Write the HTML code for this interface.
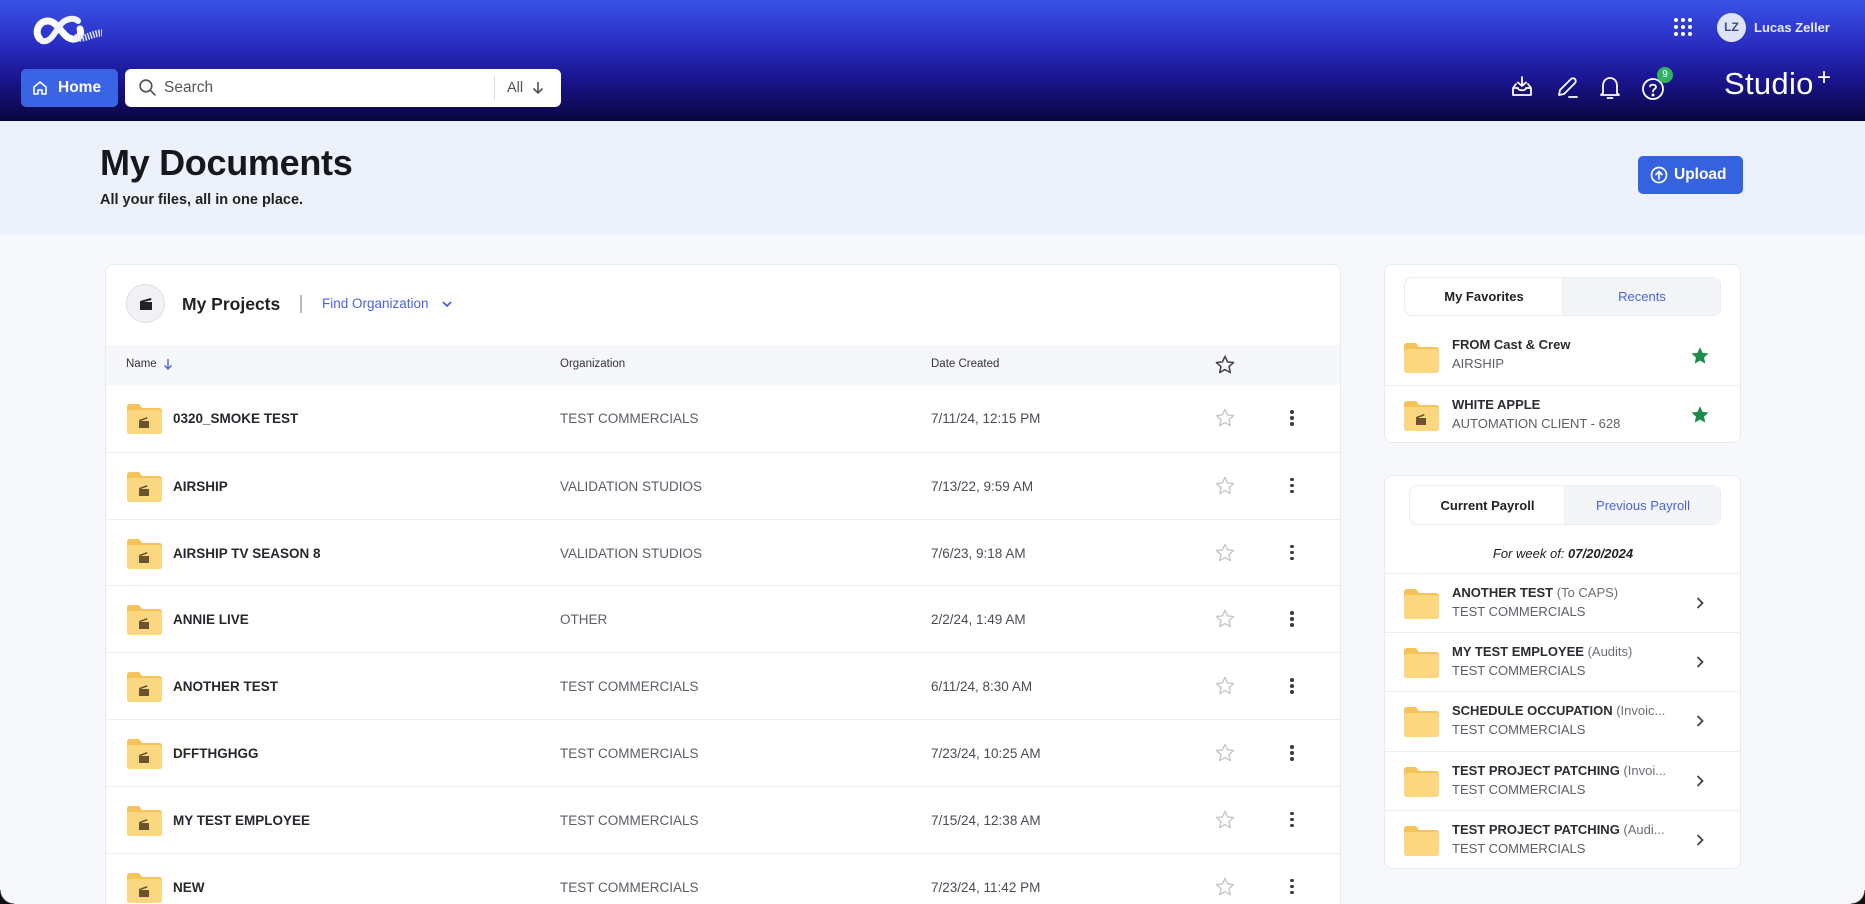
<!DOCTYPE html>
<html style="width:1865px;height:904px;overflow:hidden"><head><meta charset="utf-8"><style>
*{box-sizing:border-box;margin:0;padding:0}
body{width:1865px;height:904px;overflow:hidden;background:#f7f8fb;font-family:"Liberation Sans",sans-serif;position:relative;color:#1d1f24}
.a{position:absolute}
.hdr{left:0;top:0;width:1865px;height:121px;background:linear-gradient(180deg,#3a52e6 0%,#2a2fc4 35%,#1a1590 65%,#0a0640 100%)}
.hero{left:0;top:121px;width:1865px;height:114px;background:#edf1fb}
.card{background:#fff;border:1px solid #e8eaef;border-radius:8px}
.row{position:absolute;left:0;width:1235px;height:67px;border-top:1px solid #eceef2}
.fold{position:absolute;width:36px;height:30px}
.nm{position:absolute;left:67px;font-size:13.5px;font-weight:bold;color:#26282d}
.org{position:absolute;left:454px;font-size:13.5px;color:#5b5e66}
.dt{position:absolute;left:825px;font-size:13.5px;color:#4a4d55}
.st{position:absolute;left:1108px}
.dots{position:absolute;left:1184px;width:4px}
.dots i{display:block;width:3.5px;height:3.5px;border-radius:50%;background:#3a3d44;margin-bottom:2.5px}
.ri{position:absolute;left:0;width:356px;border-top:1px solid #eceef2}
.ri .t{position:absolute;left:67px;font-size:13px;font-weight:bold;color:#2a2c31;white-space:nowrap}
.ri .t span{font-weight:normal;color:#6b6e76}
.ri .s{position:absolute;left:67px;font-size:13px;color:#5b5e66}
</style></head><body>
<div class="a hdr"></div>
<svg class="a" style="left:32px;top:11px" width="72" height="40" viewBox="0 0 72 40">
<path d="M8 28 C2 22,6 10,16 10 C26 10,30 26,40 28 C46 29,50 24,48 18" fill="none" stroke="#fff" stroke-width="7" stroke-linecap="round"/>
<path d="M10 30 C20 32,24 18,30 12 C34 8,42 6,46 10" fill="none" stroke="#f2f4ff" stroke-width="6" stroke-linecap="round"/>
<path d="M42 26 C52 30,60 22,70 22" fill="none" stroke="#dfe3ff" stroke-width="7" stroke-dasharray="1.5 1.3"/>
</svg>
<div class="a" style="left:21px;top:69px;width:97px;height:38px;background:#3a64e3;border-radius:5px"></div>
<svg class="a" style="left:32px;top:80px" width="16" height="16" viewBox="0 0 16 16"><path d="M2 7 L8 2 L14 7 V14 H10 V10 H6 V14 H2 Z" fill="none" stroke="#fff" stroke-width="1.6" stroke-linejoin="round"/></svg>
<div class="a" style="left:58px;top:79px;color:#fff;font-size:15.5px;font-weight:bold">Home</div>
<div class="a" style="left:125px;top:69px;width:436px;height:38px;background:#fff;border-radius:6px"></div>
<svg class="a" style="left:138px;top:78px" width="19" height="19" viewBox="0 0 18 18"><circle cx="7.5" cy="7.5" r="5.5" fill="none" stroke="#555" stroke-width="1.6"/><path d="M11.5 11.5 L16 16" stroke="#555" stroke-width="1.6" stroke-linecap="round"/></svg>
<div class="a" style="left:164px;top:79px;color:#555;font-size:15.5px">Search</div>
<div class="a" style="left:494px;top:76px;width:1px;height:24px;background:#ddd"></div>
<div class="a" style="left:507px;top:80px;color:#555;font-size:14.5px">All</div>
<svg class="a" style="left:532px;top:81px" width="12" height="14" viewBox="0 0 12 14"><path d="M6 1 V12 M1.5 7.5 L6 12 L10.5 7.5" fill="none" stroke="#555" stroke-width="1.6"/></svg>
<svg class="a" style="left:1673px;top:17px" width="20" height="20" viewBox="0 0 20 20" fill="#fff"><circle cx="3" cy="3" r="2"/><circle cx="10" cy="3" r="2"/><circle cx="17" cy="3" r="2"/><circle cx="3" cy="10" r="2"/><circle cx="10" cy="10" r="2"/><circle cx="17" cy="10" r="2"/><circle cx="3" cy="17" r="2"/><circle cx="10" cy="17" r="2"/><circle cx="17" cy="17" r="2"/></svg>
<div class="a" style="left:1717px;top:13px;width:29px;height:29px;border-radius:50%;background:#dfe4f5;color:#3d4a8c;font-size:12px;font-weight:bold;text-align:center;line-height:29px">LZ</div>
<div class="a" style="left:1754px;top:20px;color:#e8ebff;font-size:13px;font-weight:bold">Lucas Zeller</div>
<svg class="a" style="left:1510px;top:75px" width="24" height="24" viewBox="0 0 24 24" fill="none" stroke="#fff" stroke-width="1.8" stroke-linecap="round" stroke-linejoin="round"><path d="M12 2 V11 M8 7.5 L12 11 L16 7.5"/><path d="M3 13 L6 9 M21 13 L18 9 M3 13 V20 H21 V13 H16 C16 16,8 16,8 13 Z"/></svg>
<svg class="a" style="left:1555px;top:75px" width="24" height="24" viewBox="0 0 24 24" fill="none" stroke="#fff" stroke-width="1.8" stroke-linecap="round" stroke-linejoin="round"><path d="M4 20 L5 15 L16 4 C17 3,19 3,20 4 C21 5,21 7,20 8 L9 19 Z M14 22 H22"/></svg>
<svg class="a" style="left:1598px;top:75px" width="24" height="26" viewBox="0 0 24 26" fill="none" stroke="#fff" stroke-width="1.8" stroke-linecap="round" stroke-linejoin="round"><path d="M5 18 V11 C5 6,8 3,12 3 C16 3,19 6,19 11 V18 L21 20 H3 Z M9.5 23 H14.5"/></svg>
<svg class="a" style="left:1641px;top:77px" width="24" height="24" viewBox="0 0 24 24" fill="none" stroke="#fff" stroke-width="1.8" stroke-linecap="round"><circle cx="12" cy="12" r="10"/><path d="M9 9.5 C9 7,15 7,15 10 C15 12,12 12,12 14.5"/><circle cx="12" cy="18" r=".6" fill="#fff"/></svg>
<div class="a" style="left:1657px;top:67px;width:16px;height:16px;border-radius:50%;background:#2fb45f;color:#fff;font-size:10px;text-align:center;line-height:16px">9</div>
<div class="a" style="left:1724px;top:66px;color:#fff;font-size:31px;letter-spacing:.3px;line-height:36px">Studio</div>
<div class="a" style="left:1817px;top:66px;color:#fff;font-size:24px;line-height:24px">+</div>
<div class="a hero"></div>
<div class="a" style="left:100px;top:142px;font-size:36px;font-weight:bold;color:#16181d;letter-spacing:-.3px">My Documents</div>
<div class="a" style="left:100px;top:192px;font-size:14.5px;font-weight:bold;color:#222">All your files, all in one place.</div>
<div class="a" style="left:1638px;top:156px;width:105px;height:38px;background:#3563e0;border-radius:5px"></div>
<svg class="a" style="left:1650px;top:166px" width="18" height="18" viewBox="0 0 18 18" fill="none" stroke="#fff" stroke-width="1.7" stroke-linecap="round"><circle cx="9" cy="9" r="7.5"/><path d="M9 13 V5.5 M6 8.5 L9 5.5 L12 8.5"/></svg>
<div class="a" style="left:1674px;top:166px;color:#fff;font-size:15.5px;font-weight:bold">Upload</div>
<div class="a card" style="left:105px;top:264px;width:1236px;height:660px;overflow:hidden">
 <div class="a" style="left:20px;top:19px;width:39px;height:39px;border-radius:50%;background:#f1f2f5;border:1px solid #dcdee3"></div>
 <svg class="a" style="left:32px;top:31px" width="16" height="16" viewBox="0 0 16 16"><path d="M2 6 H14 V14 H2 Z" fill="#222"/><path d="M2 5 L13 2 L13.5 4 L2.5 7 Z" fill="#222"/></svg>
 <div class="a" style="left:76px;top:29px;font-size:17.5px;font-weight:bold;color:#222">My Projects</div>
 <div class="a" style="left:194px;top:30px;width:1.5px;height:18px;background:#bbb"></div>
 <div class="a" style="left:216px;top:31px;font-size:13.5px;color:#4a62e0">Find Organization</div>
 <svg class="a" style="left:335px;top:34px" width="12" height="10" viewBox="0 0 12 10"><path d="M2 3 L6 7 L10 3" fill="none" stroke="#4a62e0" stroke-width="1.8"/></svg>
 <div class="a" style="left:0;top:80px;width:1236px;height:40px;background:#f5f7fa"></div>
 <div class="a" style="left:20px;top:93px;font-size:11.5px;color:#333">Name</div>
 <svg class="a" style="left:57px;top:93px" width="10" height="13" viewBox="0 0 10 13"><path d="M5 1 V11 M1.5 7.5 L5 11 L8.5 7.5" fill="none" stroke="#4a62e0" stroke-width="1.4"/></svg>
 <div class="a" style="left:454px;top:93px;font-size:11.5px;color:#333">Organization</div>
 <div class="a" style="left:825px;top:93px;font-size:11.5px;color:#333">Date Created</div>
 <svg class="a" style="left:1108px;top:89px" width="22" height="22" viewBox="0 0 24 24"><path d="M12 2.5 L14.8 8.6 L21.4 9.3 L16.4 13.7 L17.8 20.3 L12 17 L6.2 20.3 L7.6 13.7 L2.6 9.3 L9.2 8.6 Z" fill="none" stroke="#444" stroke-width="1.7" stroke-linejoin="round"/></svg>
 <div id="rows"></div>
</div>
<div class="a card" style="left:1384px;top:264px;width:357px;height:179px">
 <div class="a" style="left:19px;top:12px;width:317px;height:39px;border-radius:8px;background:#f3f5f9;border:1px solid #eceef2"></div>
 <div class="a" style="left:20px;top:13px;width:158px;height:37px;border-radius:8px 0 0 8px;background:#fff;border-right:1px solid #eceef2"></div>
 <div class="a" style="left:20px;top:24px;width:158px;text-align:center;font-size:13px;font-weight:bold;color:#222">My Favorites</div>
 <div class="a" style="left:178px;top:24px;width:158px;text-align:center;font-size:13px;color:#4a62e0">Recents</div>
 <div class="ri" style="top:60px;height:60px;border-top:none"><svg class="fold" style="left:18px;top:18px"><use href="#fd"/></svg><div class="t" style="top:12px">FROM Cast &amp; Crew</div><div class="s" style="top:31px">AIRSHIP</div><svg class="a" style="left:304px;top:20px" width="22" height="22" viewBox="0 0 24 24"><path d="M12 2.5 L14.8 8.6 L21.4 9.3 L16.4 13.7 L17.8 20.3 L12 17 L6.2 20.3 L7.6 13.7 L2.6 9.3 L9.2 8.6 Z" fill="#1f8a4c"/></svg></div>
 <div class="ri" style="top:120px;height:58px"><svg class="fold" style="left:18px;top:15px"><use href="#fdc"/></svg><div class="t" style="top:11px">WHITE APPLE</div><div class="s" style="top:30px">AUTOMATION CLIENT - 628</div><svg class="a" style="left:304px;top:18px" width="22" height="22" viewBox="0 0 24 24"><path d="M12 2.5 L14.8 8.6 L21.4 9.3 L16.4 13.7 L17.8 20.3 L12 17 L6.2 20.3 L7.6 13.7 L2.6 9.3 L9.2 8.6 Z" fill="#1f8a4c"/></svg></div>
</div>
<div class="a card" style="left:1384px;top:475px;width:357px;height:394px">
 <div class="a" style="left:24px;top:9px;width:312px;height:40px;border-radius:8px;background:#f3f5f9;border:1px solid #eceef2"></div>
 <div class="a" style="left:25px;top:10px;width:155px;height:38px;border-radius:8px 0 0 8px;background:#fff;border-right:1px solid #eceef2"></div>
 <div class="a" style="left:25px;top:22px;width:155px;text-align:center;font-size:13px;font-weight:bold;color:#222">Current Payroll</div>
 <div class="a" style="left:180px;top:22px;width:156px;text-align:center;font-size:13px;color:#4a62e0">Previous Payroll</div>
 <div class="a" style="left:0;top:70px;width:356px;text-align:center;font-size:13px;font-style:italic;color:#222">For week of: <b>07/20/2024</b></div>
 <div id="pay"></div>
</div>
<svg width="0" height="0" style="position:absolute"><defs>
<g id="fd"><path d="M1 3 Q1 0 4 0 H13 L16 4 H33 Q36 4 36 7 V27 Q36 30 33 30 H4 Q1 30 1 27 Z" fill="#f5c35a"/><path d="M1 8 Q1 6 4 6 H33 Q36 6 36 9 V27 Q36 30 33 30 H4 Q1 30 1 27 Z" fill="#fbd77f"/></g>
<g id="fdc"><use href="#fd"/><path d="M13 17 H23 V24 H13 Z" fill="#6b5330"/><path d="M13 16 L21 13 L21.5 14.5 L13.5 17.5 Z" fill="#6b5330"/></g>
</defs></svg>
<div class="a" style="left:0;top:890px;width:14px;height:14px;background:radial-gradient(circle at 14px 0,transparent 13px,#111 14px)"></div>
<div class="a" style="left:1851px;top:890px;width:14px;height:14px;background:radial-gradient(circle at 0 0,transparent 13px,#111 14px)"></div>
<script>
var R=[["0320_SMOKE TEST","TEST COMMERCIALS","7/11/24, 12:15 PM"],["AIRSHIP","VALIDATION STUDIOS","7/13/22, 9:59 AM"],["AIRSHIP TV SEASON 8","VALIDATION STUDIOS","7/6/23, 9:18 AM"],["ANNIE LIVE","OTHER","2/2/24, 1:49 AM"],["ANOTHER TEST","TEST COMMERCIALS","6/11/24, 8:30 AM"],["DFFTHGHGG","TEST COMMERCIALS","7/23/24, 10:25 AM"],["MY TEST EMPLOYEE","TEST COMMERCIALS","7/15/24, 12:38 AM"],["NEW","TEST COMMERCIALS","7/23/24, 11:42 PM"]];
var star='<svg width="22" height="22" viewBox="0 0 24 24"><path d="M12 2.5 L14.8 8.6 L21.4 9.3 L16.4 13.7 L17.8 20.3 L12 17 L6.2 20.3 L7.6 13.7 L2.6 9.3 L9.2 8.6 Z" fill="none" stroke="#c4c6cc" stroke-width="1.5" stroke-linejoin="round"/></svg>';
var h="";R.forEach(function(r,i){var t=120+i*66.8;h+='<div class="row" style="top:'+t+'px'+(i==0?';border-top:none':'')+'"><svg class="fold" style="left:20px;top:19px"><use href="#fdc"/></svg><div class="nm" style="top:26px">'+r[0]+'</div><div class="org" style="top:26px">'+r[1]+'</div><div class="dt" style="top:26px">'+r[2]+'</div><div class="st" style="top:22px">'+star+'</div><div class="dots" style="top:25px"><i></i><i></i><i></i></div></div>'});
document.getElementById("rows").innerHTML=h;
var P=[["ANOTHER TEST"," (To CAPS)"],["MY TEST EMPLOYEE"," (Audits)"],["SCHEDULE OCCUPATION"," (Invoic..."],["TEST PROJECT PATCHING"," (Invoi..."],["TEST PROJECT PATCHING"," (Audi..."]];
h="";P.forEach(function(p,i){var t=97+i*59.2;h+='<div class="ri" style="top:'+t+'px;height:59px"><svg class="fold" style="left:18px;top:15px"><use href="#fd"/></svg><div class="t" style="top:11px">'+p[0]+'<span>'+p[1]+'</span></div><div class="s" style="top:30px">TEST COMMERCIALS</div><svg class="a" style="left:310px;top:22px" width="10" height="14" viewBox="0 0 10 14"><path d="M2.5 2 L7.5 7 L2.5 12" fill="none" stroke="#444" stroke-width="1.8"/></svg></div>'});
document.getElementById("pay").innerHTML=h;
</script>
</body></html>
